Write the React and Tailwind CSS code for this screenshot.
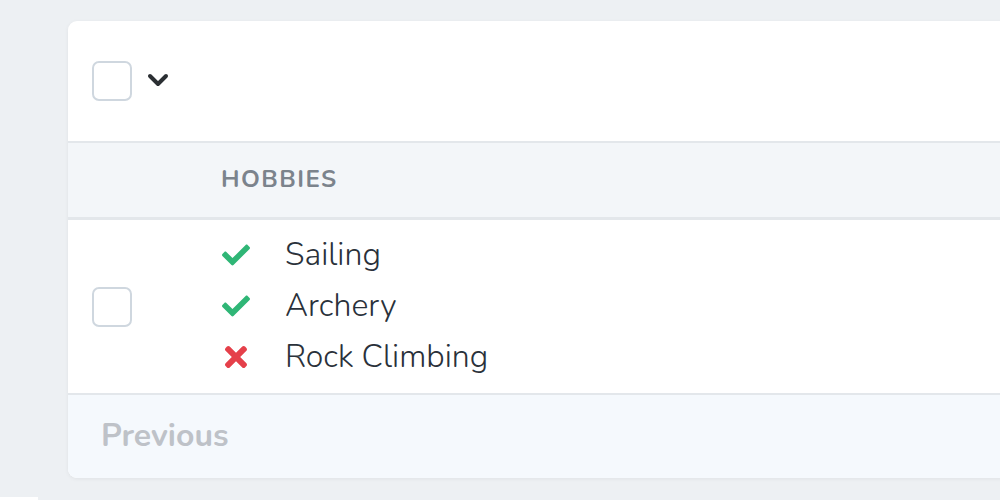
import React from "react";
import { FaCheck, FaTimes } from "react-icons/fa";

function Box() {
  return <div className="w-[40px] h-[40px] rounded-[7px] border-2 border-[#cfd7df] bg-white shrink-0" />;
}

const items = [
  { ok: true, label: "Sailing" },
  { ok: true, label: "Archery" },
  { ok: false, label: "Rock Climbing" },
];

export default function App() {
  return (
    <div
      className="relative w-[1000px] h-[500px] overflow-hidden bg-[#edf0f3] pl-[68px] pt-[21px]"
      style={{ fontFamily: '"Nunito", "Lato", "Open Sans", sans-serif' }}
    >
      <div className="w-[960px] h-[457px] rounded-[9px] bg-white shadow-[0_1px_4px_rgba(0,0,0,0.06)] overflow-hidden flex flex-col">
        <div className="h-[122px] shrink-0 flex items-center pl-[24px] gap-[14px] border-b-2 border-[#e3e7eb]">
          <Box />
          <svg width="24" height="14" viewBox="0 0 24 14" className="mt-[-2px]">
            <path d="M4 3 L12 11 L20 3" fill="none" stroke="#2b2f33" strokeWidth="4" strokeLinecap="round" strokeLinejoin="round" />
          </svg>
        </div>
        <div className="h-[77px] shrink-0 bg-[#f3f6f9] border-b-[3px] border-[#e3e7eb] flex items-center pl-[153px]">
          <span className="text-[24px] font-bold tracking-[0.06em] text-[#7b838c] mt-[-2px]">HOBBIES</span>
        </div>
        <div className="h-[175px] shrink-0 flex items-center pl-[24px] border-b-2 border-[#e3e7eb]">
          <Box />
          <div className="flex flex-col ml-[90px] mt-[-2px]">
            {items.map((it) => (
              <div key={it.label} className="flex items-center h-[51px]">
                <div className="w-[28px] flex justify-center mt-[1px]">
                  {it.ok ? (
                    <FaCheck size={28} color="#2fb676" />
                  ) : (
                    <FaTimes size={32} color="#e5404a" />
                  )}
                </div>
                <span className="ml-[35px] text-[32px] font-light text-[#2a313a] leading-[51px]">{it.label}</span>
              </div>
            ))}
          </div>
        </div>
        <div className="flex-1 bg-[#f5f9fd] flex items-center pl-[33px]">
          <span className="text-[32px] font-bold text-[#bec2c8] mt-[-2px]">Previous</span>
        </div>
      </div>
      <div className="absolute left-0 bottom-0 w-[38px] h-[3px] bg-white" />
    </div>
  );
}
